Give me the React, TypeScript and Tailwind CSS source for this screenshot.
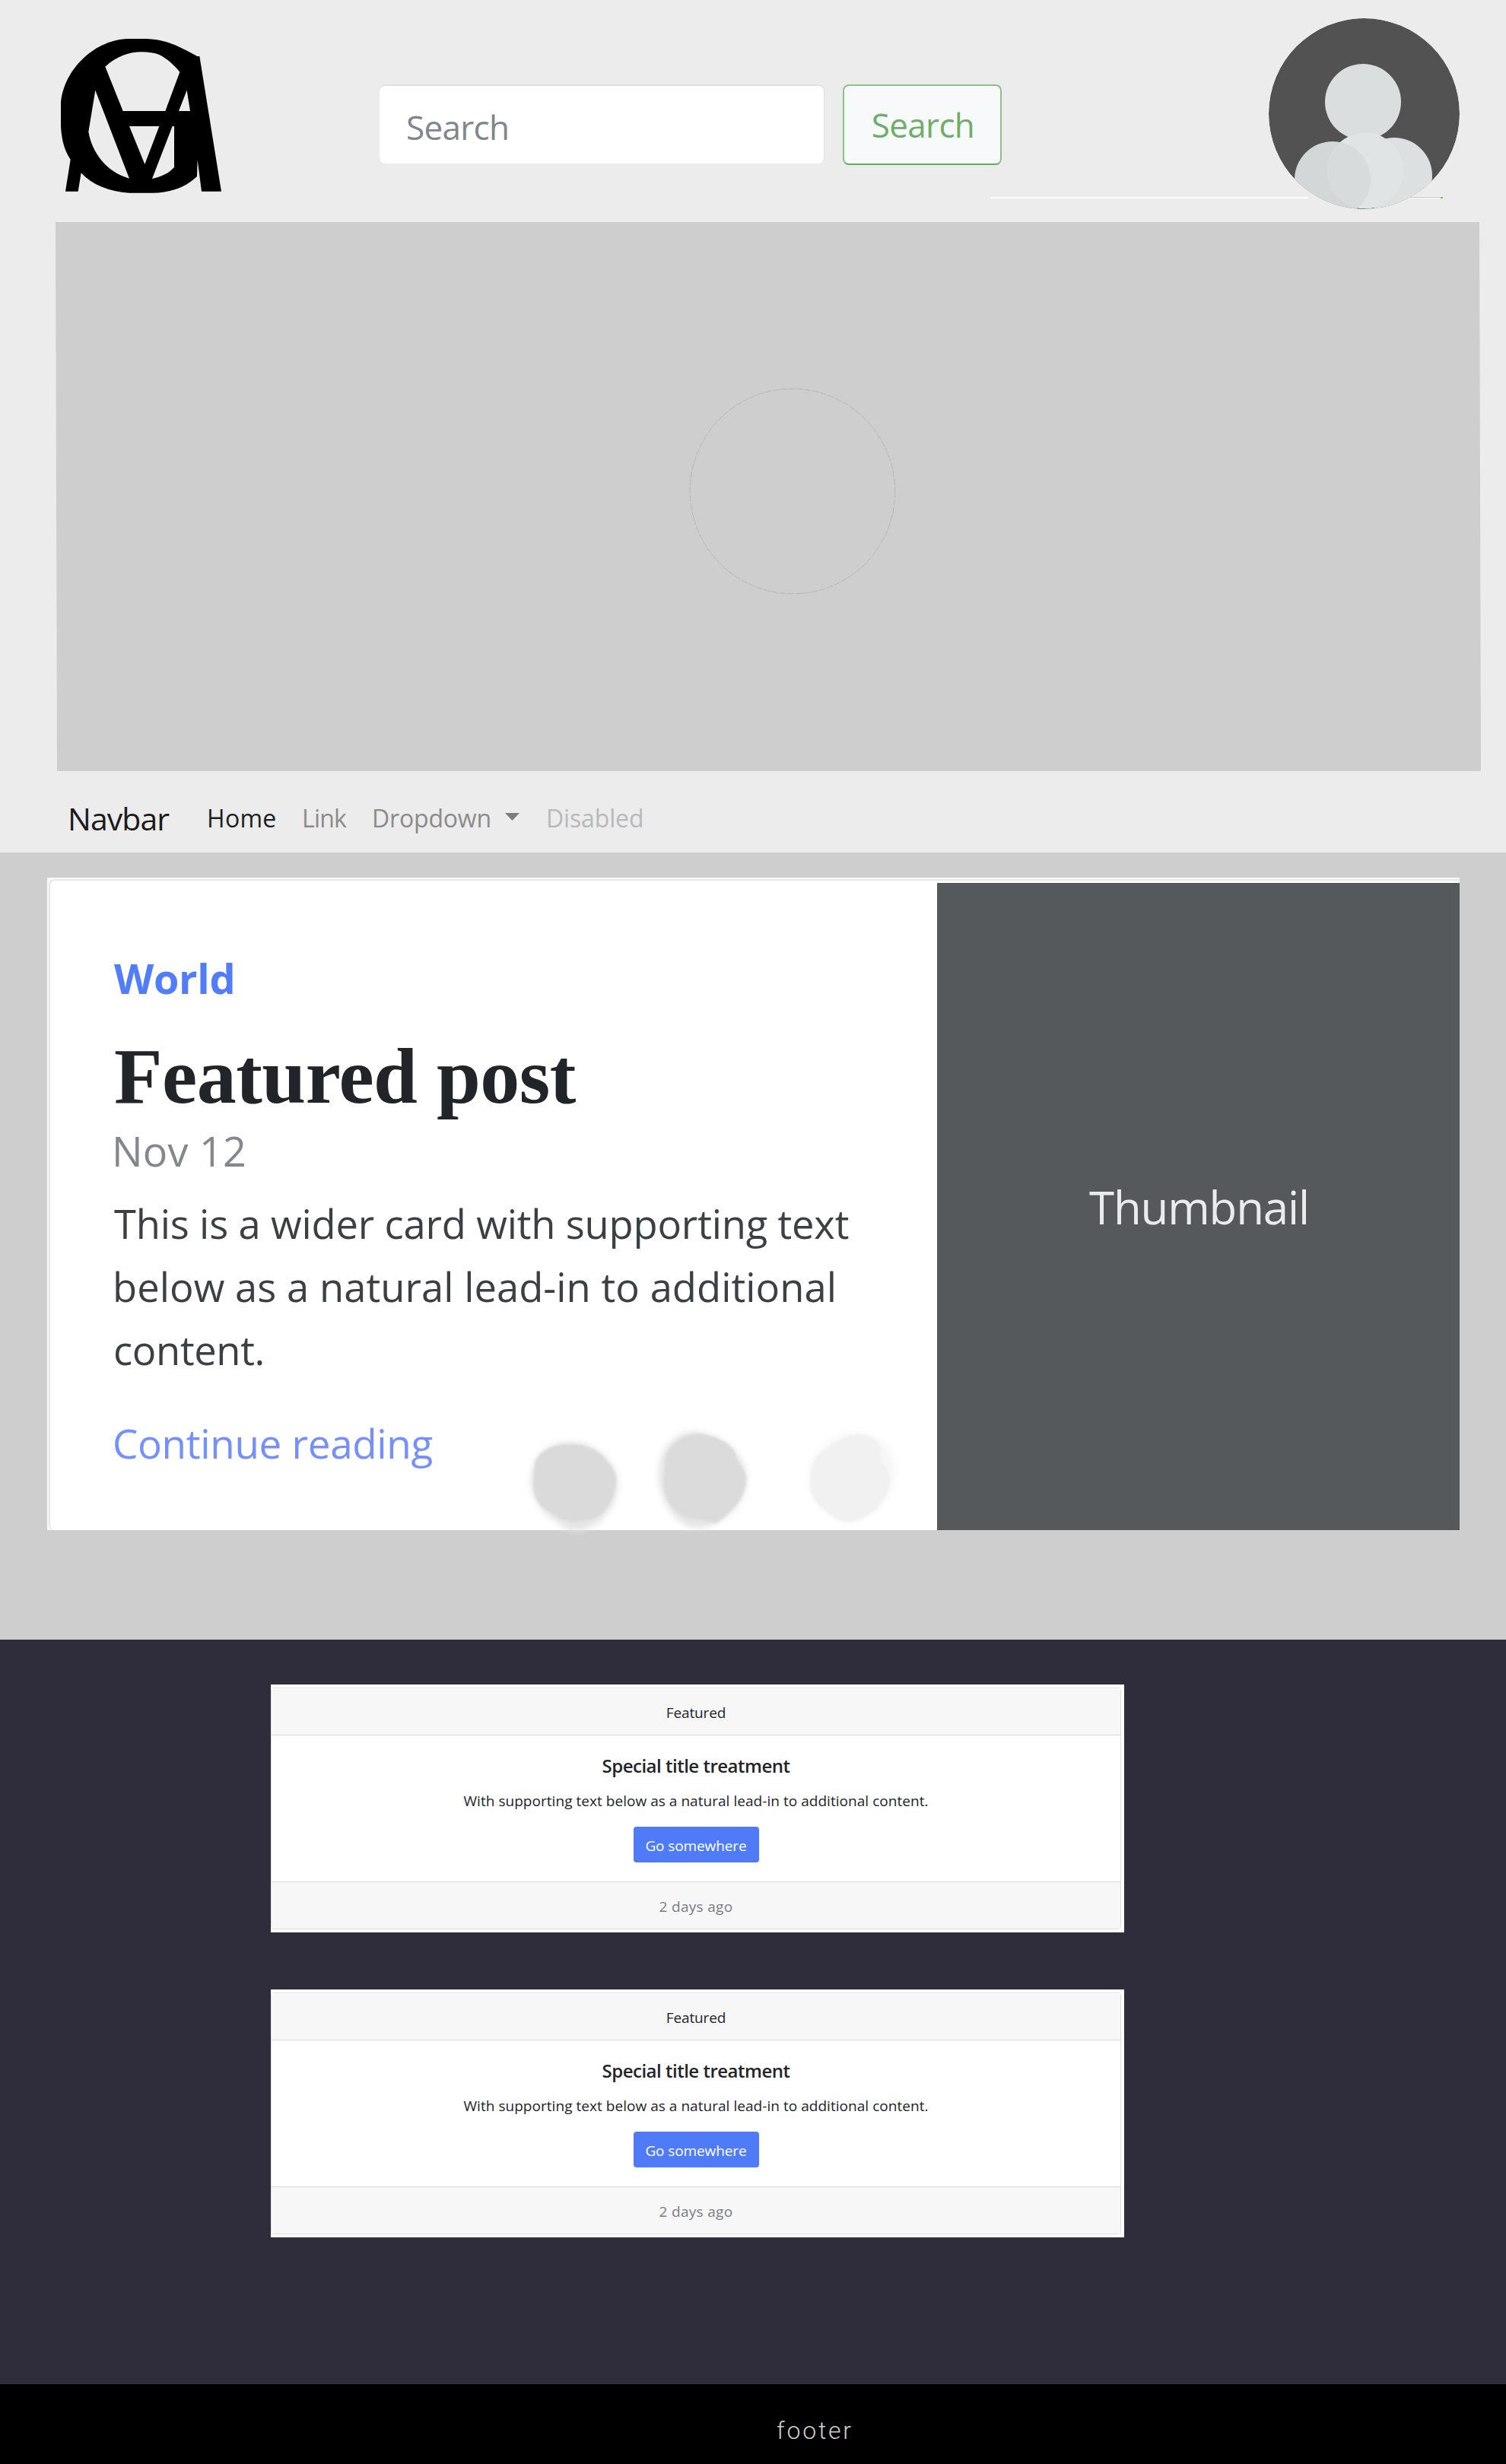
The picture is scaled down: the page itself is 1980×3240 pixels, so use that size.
function Logo() {
  return (
    <svg viewBox="0 0 780 720" className="ml-[60px] mt-[30px] h-[240px] w-[260px] shrink-0" aria-label="Logo">
      <path
        fillRule="evenodd"
        fill="#000"
        d="M78 665 L98 539 C76 505 64 470 60 410 L60 325 C64 200 180 68 325 63 L395 63 C480 66 530 95 598 132 L607 132 L693 665 L615 665 L599 541 L597 606 C550 650 490 671 420 671 L330 671 C250 666 185 640 140 592 L128 665 Z
        M235 173 C280 132 330 115 378 115 C405 115 430 118 450 127 C480 143 505 165 529 194 L472 348 L305 348 Z
        M557 266 L570 348 L525 348 Z
        M196 266 L330 614 C240 590 182 510 169 430 Z
        M330 408 L448 408 L391 558 Z
        M500 408 L507 408 L507 570 C485 594 455 608 420 615 Z"
      />
    </svg>
  );
}

function Avatar() {
  return (
    <svg viewBox="0 0 252 252" className="relative ml-[351px] mt-[24px] h-[252px] w-[252px] shrink-0" aria-label="Profile">
      <defs>
        <clipPath id="avatar-clip">
          <circle cx="125.5" cy="125.5" r="125.5" />
        </clipPath>
        <clipPath id="shoulder-clip">
          <circle cx="84" cy="212" r="50" />
        </clipPath>
      </defs>
      <g clipPath="url(#avatar-clip)">
        <circle cx="125.5" cy="125.5" r="125.5" fill="#525252" />
        <circle cx="124" cy="110" r="50" fill="#dadedf" />
        <circle cx="165" cy="231" r="50" fill="#dce0e1" transform="translate(0 -24)" />
        <circle cx="84" cy="212" r="50" fill="#d3d7d8" />
        <circle cx="127" cy="200.5" r="50" fill="#e0e4e5" />
        <circle cx="127" cy="200.5" r="50" fill="#d7dbdc" clipPath="url(#shoulder-clip)" />
      </g>
    </svg>
  );
}

function Header() {
  return (
    <header className="relative flex h-[292px] items-start">
      <div className="absolute left-[1302px] top-[259px] h-[2px] w-[418px] rounded-full bg-white" />
      <div className="absolute left-[1845px] top-[259px] flex h-[2px] w-[52px] justify-end border-t border-[#b9d8b7] bg-[#f6f8fa]">
        <div className="-mt-px h-[2px] w-[3px] bg-[#7fba7a]" />
      </div>
      <Logo />
      <form className="ml-[179px] mt-[111px] flex items-start">
        <input
          type="text"
          placeholder="Search"
          className="h-[104px] w-[585px] rounded-[8px] border-t-2 border-r border-[#dde2e7] bg-white pl-[35px] pt-[5px] text-[44px] tracking-[-0.67px] placeholder:text-[#7f868d]"
        />
        <button
          type="button"
          className="ml-[24px] h-[106px] w-[209px] rounded-[8px] border-2 border-[#8cc287] border-b-[#63ae5c] bg-[#f8f9fb] pl-[2px] text-[44px] tracking-[-0.67px] text-[#6fae69]"
        >
          Search
        </button>
      </form>
      <Avatar />
    </header>
  );
}

function Hero() {
  return (
    <div className="ml-[74px] flex h-[722px] w-[1872px] skew-x-[0.16deg] bg-[#cecece]">
      <svg viewBox="0 0 272 272" className="ml-[832px] mt-[218px] h-[272px] w-[272px]" aria-hidden="true">
        <circle cx="136" cy="136" r="134.8" fill="none" stroke="#b4b4b4" strokeWidth="0.9" strokeDasharray="9 1.5" />
      </svg>
    </div>
  );
}

function Navbar() {
  return (
    <nav className="flex h-[107px] items-start pl-[89px] text-[32px] leading-[123px]">
      <a className="w-[183px] text-[41px] leading-[125px] tracking-[-0.95px] text-[#1b1b1b]">Navbar</a>
      <a className="w-[125px] tracking-[0.3px] text-[#1f1f1f]">Home</a>
      <a className="w-[92px] tracking-[-0.8px] text-[#8b8b8b]">Link</a>
      <a className="flex w-[229px] tracking-[-0.18px] text-[#8b8b8b]">
        <span className="w-[175px]">Dropdown</span>
        <svg viewBox="0 0 19 10" className="mt-[55px] h-[10px] w-[19px]" aria-hidden="true">
          <path d="M0 0H19L9.5 10Z" fill="#7c7c7c" />
        </svg>
      </a>
      <a className="tracking-[-0.15px] text-[#b9b9b9]">Disabled</a>
    </nav>
  );
}

function Smudges() {
  return (
    <svg viewBox="0 0 600 200" className="absolute left-[596px] top-[687px] h-[200px] w-[600px]" aria-hidden="true">
      <defs>
        <filter id="soft" x="-20%" y="-20%" width="140%" height="140%">
          <feGaussianBlur stdDeviation="4" />
        </filter>
        <filter id="edge" x="-10%" y="-10%" width="120%" height="120%">
          <feGaussianBlur stdDeviation="1.4" />
        </filter>
      </defs>
      <g filter="url(#soft)">
        <path d="M86 56 C120 52 150 78 154 106 C156 130 140 158 118 167 C100 178 84 170 74 160 C54 150 40 125 40 104 C42 76 58 58 86 56Z" fill="#e4e4e4" />
        <path d="M254 42 C290 44 322 70 324 104 C322 134 296 162 266 168 C236 172 212 140 208 104 C206 70 224 42 254 42Z" fill="#e4e4e4" />
        <path d="M468 42 C500 44 520 68 520 96 C516 130 490 156 458 160 C426 156 406 128 405 104 C404 72 434 44 468 42Z" fill="#f7f7f7" />
      </g>
      <g filter="url(#edge)">
        <path d="M92 58 C110 58 124 64 134 73 C142 82 152 92 152 104 C152 124 144 140 132 150 C120 158 104 161 92 160 C76 157 68 148 57 143 C46 132 43 122 43 112 C46 96 42 82 50 74 C60 62 76 58 92 58Z" fill="#dadada" />
        <path d="M260 44 C280 46 298 54 307 66 C311 82 322 90 323 103 C322 120 316 132 308 140 C298 150 292 158 282 162 C268 158 256 156 244 154 C230 148 220 136 216 122 C212 108 218 94 216 80 C218 62 236 46 260 44Z" fill="#dbdbdb" />
        <path d="M471 45 C486 45 498 54 500 66 C498 84 512 92 513 103 C512 118 506 130 498 138 C486 152 470 160 456 160 C440 158 430 148 424 143 C412 132 406 122 407 108 C408 94 408 84 416 74 C432 60 448 46 471 45Z" fill="#f1f1f1" />
      </g>
    </svg>
  );
}

function FeaturedPost() {
  return (
    <section className="h-[1035px] bg-[#cecece] pl-[62px] pt-[33px]">
      <article className="relative flex h-[858px] w-[1857px] bg-[#f7f8f8] pl-[2px] pt-[2px]">
        <div className="w-[1168px] rounded-l-[8px] border-l-2 border-t-2 border-[#e4e8ea] bg-white pl-[84px]">
          <div className="mt-[98px] text-[54px] font-bold leading-[60px] tracking-[-0.3px] text-[#527dfa]">World</div>
          <h1 className="mt-[44px] font-['Liberation_Serif',serif] text-[104px] font-bold leading-[110px] tracking-[-0.5px] text-[#212529]">
            Featured post
          </h1>
          <div className="-ml-[3px] mt-[13px] text-[54px] leading-[60px] tracking-[0.2px] text-[#82888e]">Nov 12</div>
          <p className="mt-[24px] whitespace-nowrap text-[52.5px] leading-[83px] text-[#3b4045]">
            <span className="block tracking-[-0.18px]">This is a wider card with supporting text</span>
            <span className="-ml-[2px] block tracking-[0.05px]">below as a natural lead-in to additional</span>
            <span className="-ml-px block tracking-[-0.35px]">content.</span>
          </p>
          <a className="-ml-[2px] mt-[52px] block text-[53px] leading-[60px] tracking-[-0.35px] text-[#7690fb]">Continue reading</a>
        </div>
        <div className="flex grow flex-col">
          <div className="h-[5px] border-t-2 border-[#e4e8ea] bg-white" />
          <div className="flex grow items-center justify-center bg-[#55595c] pl-[2px] text-[60px] leading-none tracking-[-1.15px] text-[#e9ebed]">
            Thumbnail
          </div>
        </div>
        <Smudges />
      </article>
    </section>
  );
}

function InfoCard() {
  return (
    <article className="h-[326px] w-[1122px] bg-white pt-[4px]">
      <div className="h-[318px] w-[1118px] rounded-[4px] border border-[#dfdfdf] text-center text-[19px] text-[#212529]">
        <div className="flex h-[62px] items-center justify-center border-b border-t border-b-[#d9d9d9] border-t-white bg-[#f7f7f7] pt-[2px] tracking-[-0.15px]">
          Featured
        </div>
        <div className="h-[192px] pt-[25px]">
          <h2 className="text-[24px] font-semibold leading-[30px] tracking-[-0.5px]">Special title treatment</h2>
          <p className="mt-[17px] leading-[28px] tracking-[0.04px]">
            With supporting text below as a natural lead-in to additional content.
          </p>
          <button type="button" className="mt-[20px] h-[47px] w-[165px] rounded-[4px] bg-[#4f7bf8] pt-[3px] tracking-[-0.1px] text-white">
            Go somewhere
          </button>
        </div>
        <div className="flex h-[62px] items-center justify-center border-t border-[#d9d9d9] bg-[#f7f7f7] pt-[3px] tracking-[0.3px] text-[#777d83]">
          2 days ago
        </div>
      </div>
    </article>
  );
}

export default function App() {
  return (
    <div className="w-[1980px] overflow-hidden bg-[#ececec] font-['Open_Sans','Noto_Sans',sans-serif]">
      <Header />
      <Hero />
      <Navbar />
      <FeaturedPost />
      <section className="flex h-[979px] flex-col gap-[75px] bg-[#2f2d3b] pl-[356px] pt-[59px]">
        <InfoCard />
        <InfoCard />
      </section>
      <footer className="h-[105px] bg-black pl-[1021px] pt-[41px] font-['Roboto',sans-serif] text-[32px] font-light leading-[40px] tracking-[2.8px] text-[#cfcfcf]">
        footer
      </footer>
    </div>
  );
}
